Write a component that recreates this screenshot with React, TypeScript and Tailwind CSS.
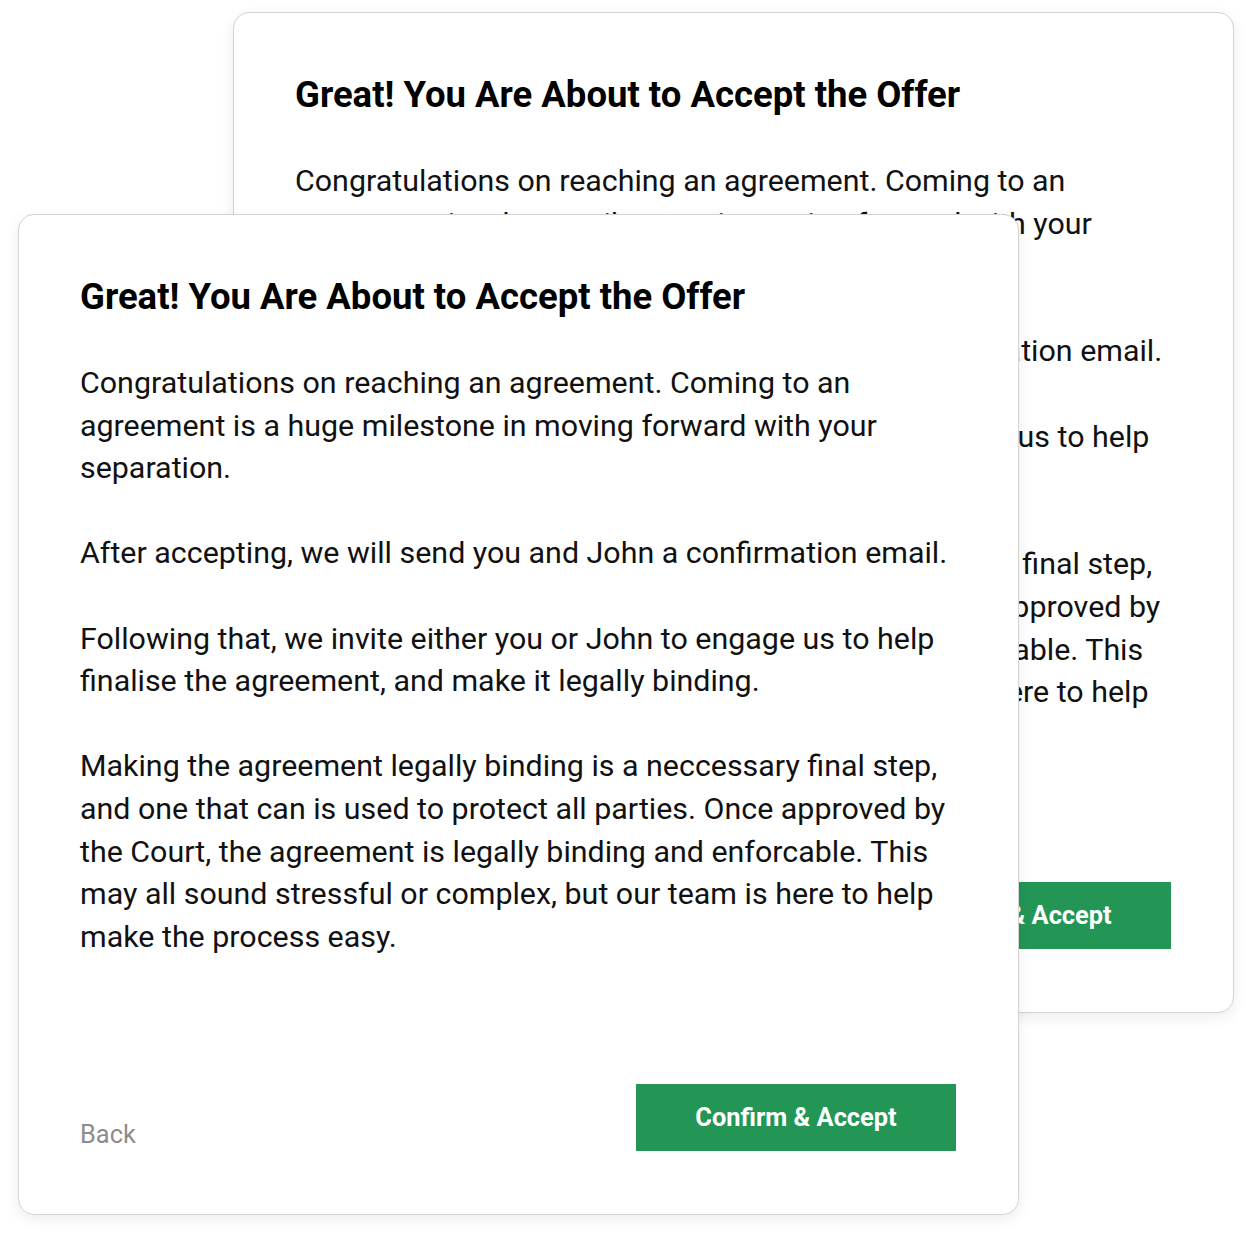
const paragraphs = [
  "Congratulations on reaching an agreement. Coming to an agreement is a huge milestone in moving forward with your separation.",
  "After accepting, we will send you and John a confirmation email.",
  "Following that, we invite either you or John to engage us to help finalise the agreement, and make it legally binding.",
  "Making the agreement legally binding is a neccessary final step, and one that can is used to protect all parties. Once approved by the Court, the agreement is legally binding and enforcable. This may all sound stressful or complex, but our team is here to help make the process easy.",
];

function OfferCard() {
  return (
    <div className="flex h-[1001px] w-[1001px] flex-col rounded-2xl border border-[#d4d4d4] bg-white pt-[59px] pr-[62px] pb-[63px] pl-[61px] shadow-[0_4px_14px_rgba(0,0,0,0.08)]">
      <h2 className="text-[36.5px] leading-[46px] font-bold text-black">
        Great! You Are About to Accept the Offer
      </h2>
      <div className="mt-[42px] flex flex-col gap-[42.6px] text-[30.4px] leading-[42.6px] text-[#111]">
        {paragraphs.map((text, index) => (
          <p key={`para-${index}`}>{text}</p>
        ))}
      </div>
      <div className="mt-auto flex items-end justify-between">
        <button className="pb-[2px] text-[25.4px] leading-[30px] text-[#8c8c8c]">Back</button>
        <button className="h-[67px] w-[320px] bg-[#239656] text-[25.4px] font-bold text-white">
          Confirm &amp; Accept
        </button>
      </div>
    </div>
  );
}

export default function App() {
  return (
    <div className="relative h-[1238px] w-[1251px] overflow-hidden bg-white font-['Roboto',sans-serif]">
      <div className="absolute top-[12px] left-[233px]">
        <OfferCard />
      </div>
      <div className="absolute top-[214px] left-[18px]">
        <OfferCard />
      </div>
    </div>
  );
}
